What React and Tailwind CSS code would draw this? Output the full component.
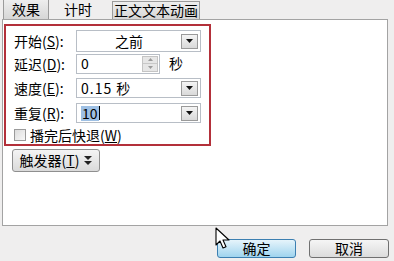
import React from "react";

const font = { fontFamily: '"Noto Sans CJK SC", "Noto Sans", sans-serif' };

function DropBtn() {
  return (
    <div className="flex h-[15px] w-[17px] items-center justify-center border border-[#9a9a9a] bg-gradient-to-b from-[#f4f4f4] to-[#d9d9d9]">
      <svg width="7" height="4" viewBox="0 0 7 4"><path d="M0 0h7L3.5 4z" fill="#111" /></svg>
    </div>
  );
}

function Label({ t, k }) {
  return (
    <div className="w-[62px] shrink-0 text-[14px] leading-none text-black">
      {t}(<span className="underline">{k}</span>):
    </div>
  );
}

export default function App() {
  return (
    <div className="relative h-[261px] w-[394px] overflow-hidden bg-[#efeeee] text-black" style={font}>
      {/* tabs */}
      <div className="flex h-[19px] items-end pl-[3px]">
        <div className="flex h-[20px] w-[46px] items-center justify-center border border-b-0 border-[#9b9b9b] bg-gradient-to-b from-[#eeeeee] to-[#d6d6d6] text-[14px]">效果</div>
        <div className="ml-[9px] flex h-[19px] w-[40px] items-center justify-center text-[14px]">计时</div>
        <div className="ml-[14px] flex h-[18px] w-[88px] items-center justify-center border border-b-0 border-[#9b9b9b] bg-gradient-to-b from-[#eeeeee] to-[#d6d6d6] text-[14px]">正文文本动画</div>
      </div>
      {/* panel */}
      <div className="ml-[2px] flex h-[207px] w-[386px] flex-col border border-[#a3a3a3] bg-white">
        <div className="ml-[1px] mt-[4px] flex h-[122px] w-[207px] flex-col border-2 border-[#b3303a] pl-[8px] pt-[4px]">
          {/* row 1 */}
          <div className="flex h-[22px] items-center">
            <Label t="开始" k="S" />
            <div className="flex h-[22px] w-[125px] items-center border border-[#b8bec6] bg-white pr-[2px]">
              <div className="flex-1 text-center text-[14px]">之前</div>
              <DropBtn />
            </div>
          </div>
          {/* row 2 */}
          <div className="mt-[1px] flex h-[21px] items-center">
            <Label t="延迟" k="D" />
            <div className="flex h-[20px] w-[84px] items-center border border-[#b8bec6] bg-white pl-[4px] pr-[1px]">
              <div className="flex-1 text-[14px]">0</div>
              <div className="flex h-[16px] w-[16px] flex-col border border-[#c4c4c4] bg-[#e6e6e6]">
                <div className="flex flex-1 items-center justify-center border-b border-[#c8c8c8]">
                  <svg width="5" height="3" viewBox="0 0 5 3"><path d="M0 3h5L2.5 0z" fill="#9a9a9a" /></svg>
                </div>
                <div className="flex flex-1 items-center justify-center">
                  <svg width="5" height="3" viewBox="0 0 5 3"><path d="M0 0h5L2.5 3z" fill="#9a9a9a" /></svg>
                </div>
              </div>
            </div>
            <div className="ml-[9px] text-[14px]">秒</div>
          </div>
          {/* row 3 */}
          <div className="mt-[4px] flex h-[20px] items-center">
            <Label t="速度" k="E" />
            <div className="flex h-[20px] w-[125px] items-center border border-[#b8bec6] bg-white pl-[4px] pr-[2px]">
              <div className="flex-1 text-[14px] tracking-[1px]">0.15 秒</div>
              <DropBtn />
            </div>
          </div>
          {/* row 4 */}
          <div className="mt-[5px] flex h-[20px] items-center">
            <Label t="重复" k="R" />
            <div className="flex h-[20px] w-[125px] items-center border border-[#b8bec6] bg-white pl-[4px] pr-[2px]">
              <div className="flex flex-1 items-center text-[14px]">
                <span className="bg-[#9ec0e4] px-[1px] leading-[15px]">10</span>
                <span className="h-[14px] w-[1px] bg-black" />
              </div>
              <DropBtn />
            </div>
          </div>
          {/* checkbox */}
          <div className="mt-[5px] flex items-center">
            <div className="h-[12px] w-[12px] border border-[#9a9a9a] bg-gradient-to-br from-[#dcdcdc] to-[#f8f8f8]" />
            <div className="ml-[4px] text-[14px] leading-none">播完后快退(<span className="underline">W</span>)</div>
          </div>
        </div>
        {/* trigger */}
        <div className="ml-[9px] mt-[3px] flex h-[23px] w-[88px] items-center justify-center rounded-[3px] border border-[#8f8f8f] bg-gradient-to-b from-[#f4f4f4] to-[#dadada] text-[14px]">
          触发器(<span className="underline">T</span>)
          <svg className="ml-[5px]" width="8" height="9" viewBox="0 0 8 9">
            <path d="M0 0h8L4 4z M0 5h8L4 9z" fill="#222" />
          </svg>
        </div>
      </div>
      {/* buttons */}
      <div className="mt-[13px] flex justify-end gap-[13px] pr-[5px]">
        <div className="flex h-[19px] w-[79px] items-center justify-center rounded-[3px] border border-[#3c7fb1] bg-gradient-to-b from-[#e6f4fb] to-[#9fd4ee] text-[14px]">确定</div>
        <div className="flex h-[19px] w-[80px] items-center justify-center rounded-[3px] border border-[#707070] bg-gradient-to-b from-[#f5f5f5] to-[#dcdcdc] text-[14px]">取消</div>
      </div>
      {/* cursor */}
      <svg className="absolute left-[215px] top-[227px]" width="16" height="24" viewBox="0 0 16 24">
        <path d="M1 1v17l4-4 3 7 3-1.3-3-6.7h6z" fill="#fff" stroke="#000" strokeWidth="1.1" strokeLinejoin="round" />
      </svg>
    </div>
  );
}
